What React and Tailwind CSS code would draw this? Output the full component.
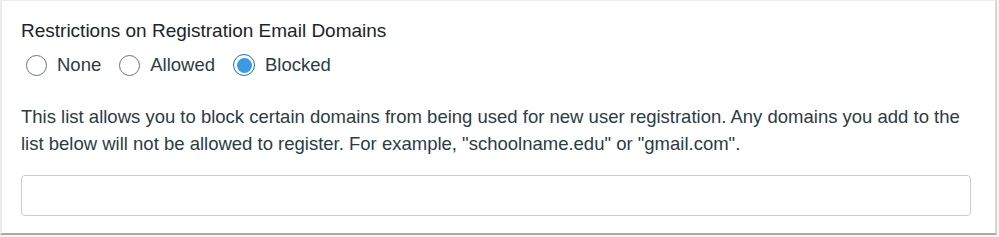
import React, { useState } from 'react';

function Radio({ label, checked, onChange }) {
  return (
    <label className="flex items-center h-[24px] cursor-pointer">
      <span
        className={
          checked
            ? 'w-[22px] h-[22px] rounded-full border-[1.5px] border-[#1a6fb5] flex items-center justify-center bg-white'
            : 'w-[21px] h-[21px] rounded-full border-[1.5px] border-[#67737c] bg-white'
        }
      >
        {checked && <span className="w-[15px] h-[15px] rounded-full bg-[#3a9be4]"></span>}
      </span>
      <input type="radio" className="hidden" checked={checked} onChange={onChange} />
      <span className="ml-[10px] text-[18.5px] leading-[22px] text-[#2d3b45]">{label}</span>
    </label>
  );
}

export default function App() {
  const [mode, setMode] = useState('blocked');
  const options = [
    { id: 'none', label: 'None' },
    { id: 'allowed', label: 'Allowed' },
    { id: 'blocked', label: 'Blocked' },
  ];

  return (
    <div className="w-[999px] h-[237px] bg-[#f5f5f5] font-['Liberation_Sans',Arial,sans-serif]">
      <div className="w-[997px] h-[235px] bg-white border-l-2 border-t border-[#ececec] border-r-2 border-r-[#d6d6d6] border-b-2 border-b-[#a9a9a9] pl-[19px] pr-[24px] pt-[19px]">
        <h2 className="text-[19px] leading-[22px] text-[#1b242b]">Restrictions on Registration Email Domains</h2>
        <div className="flex items-center gap-[18px] mt-[11px] ml-[5px]">
          {options.map((o) => (
            <Radio key={o.id} label={o.label} checked={mode === o.id} onChange={() => setMode(o.id)} />
          ))}
        </div>
        <p className="mt-[26px] text-[18.5px] leading-[27px] text-[#2d3b45]">
          This list allows you to block certain domains from being used for new user registration. Any domains you add to the list below will not be allowed to register. For example, "schoolname.edu" or "gmail.com".
        </p>
        <input
          type="text"
          className="block mt-[18px] w-[950px] h-[41px] rounded-[4px] border border-[#c7cdd1] bg-white px-3 text-[16px] outline-none"
        />
      </div>
    </div>
  );
}
